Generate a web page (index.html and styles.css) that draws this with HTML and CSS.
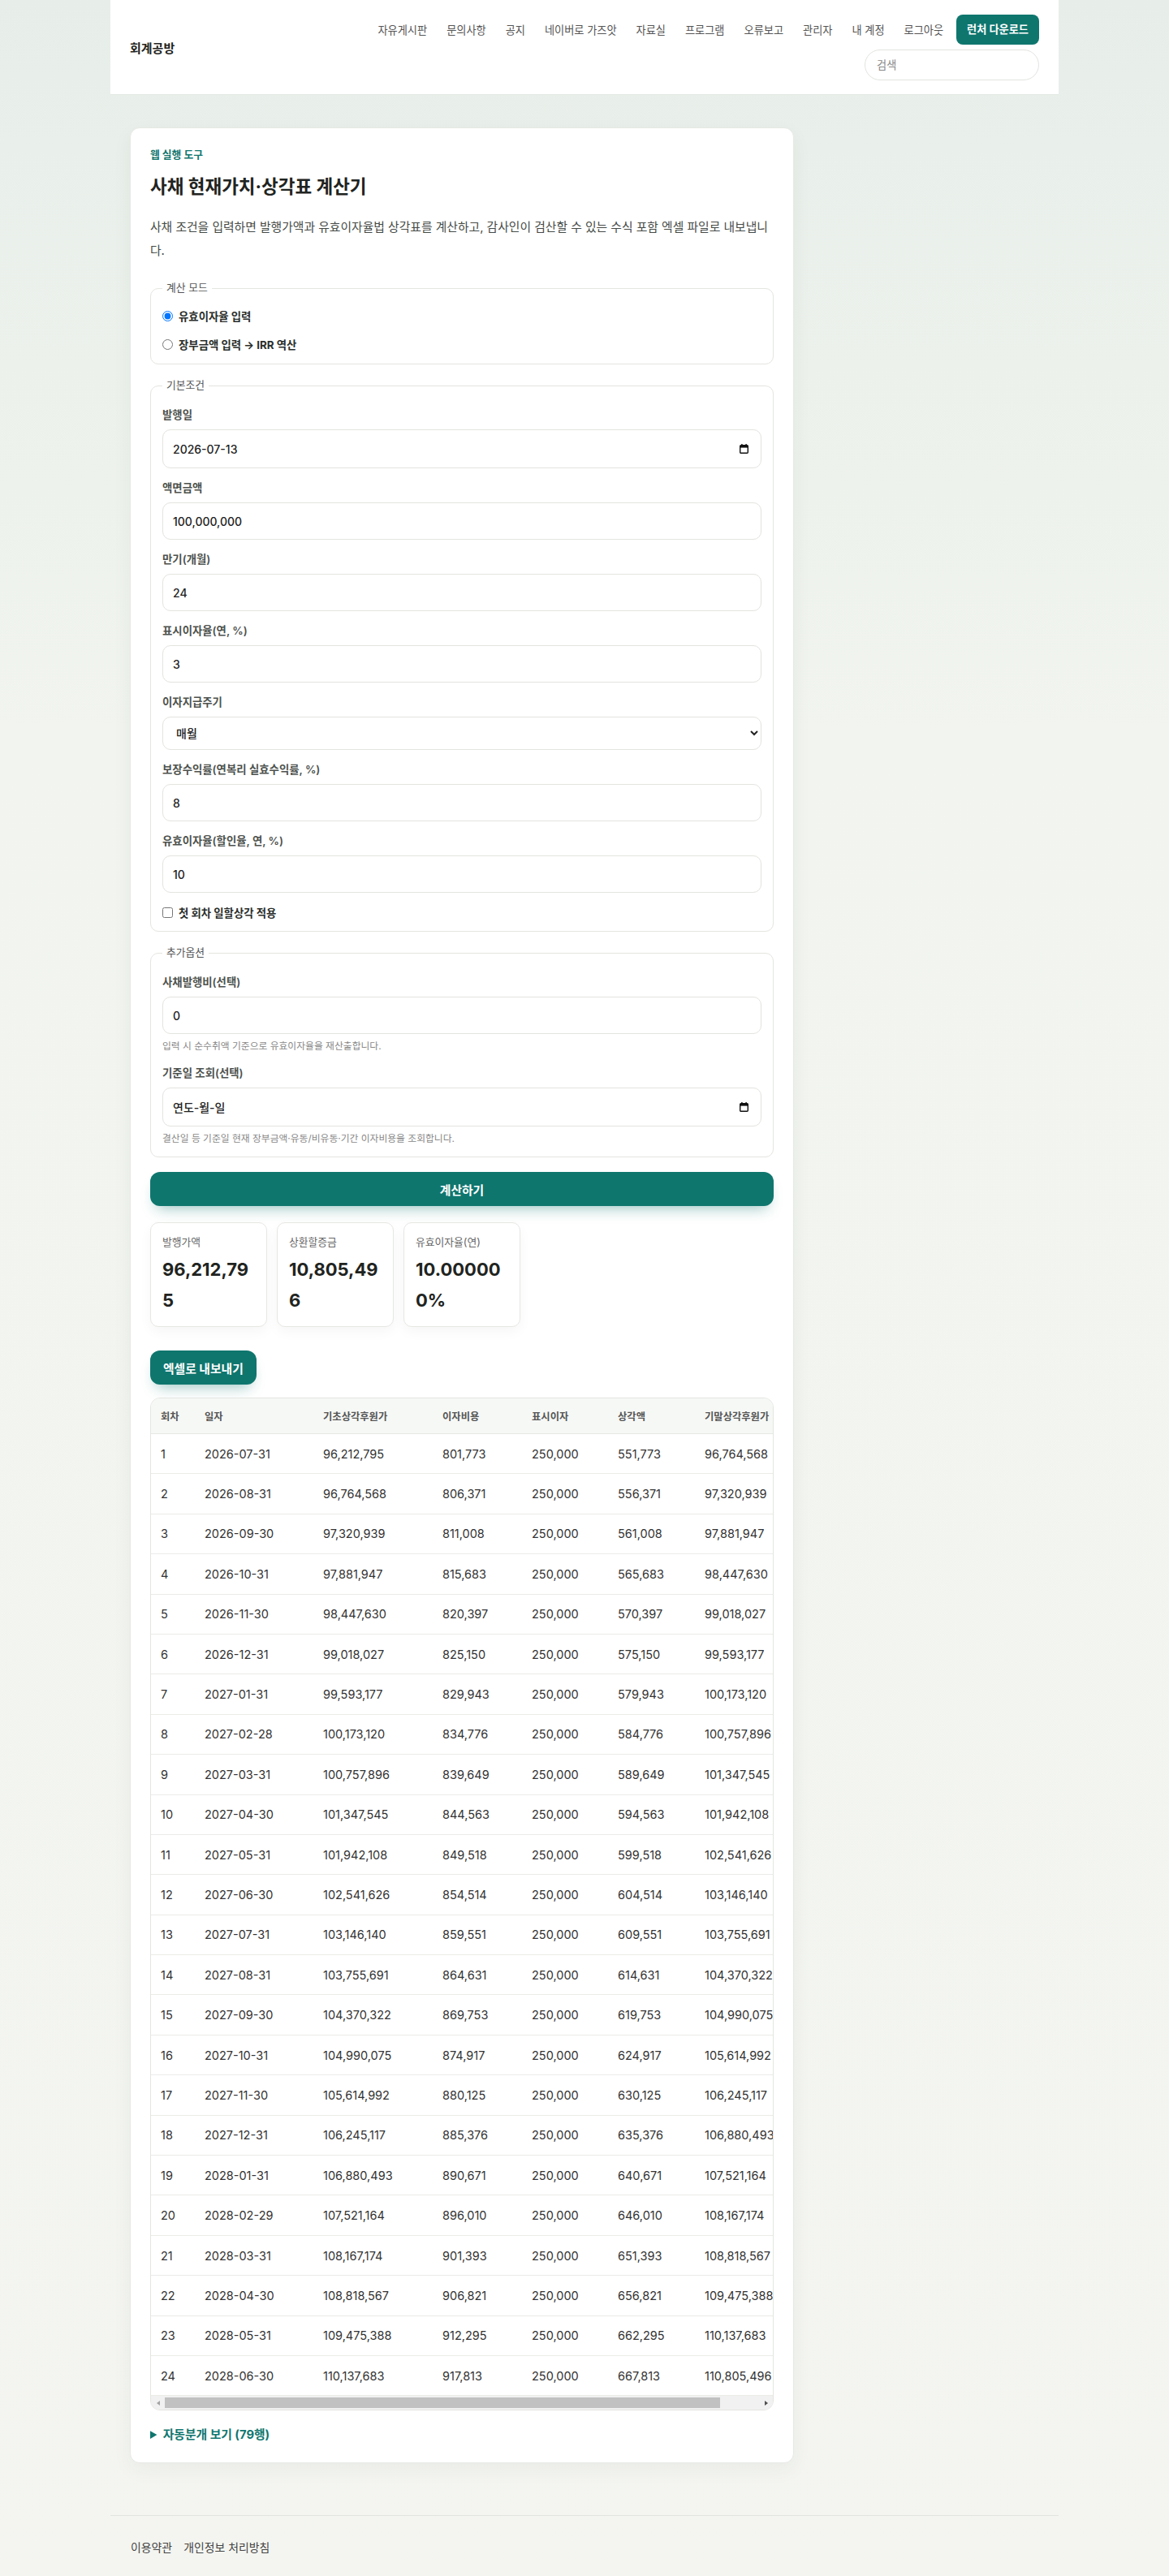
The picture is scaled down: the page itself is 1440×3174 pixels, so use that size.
FILE: index.html
```html
<!DOCTYPE html>
<html lang="ko">
<head>
  <meta charset="UTF-8" />
  <meta name="viewport" content="width=device-width, initial-scale=1.0"/>
  <title>사채 현재가치·상각표 계산기 - 회계공방</title>
  <link rel="stylesheet" href="styles.css">
</head>
<body>
  <div class="wrap">
    <header class="site-header">
      <div class="brand">회계공방</div>
      <div class="header-right">
        <nav class="nav">
          <a href="#">자유게시판</a>
          <a href="#">문의사항</a>
          <a href="#">공지</a>
          <a href="#">네이버로 가즈앗</a>
          <a href="#">자료실</a>
          <a href="#">프로그램</a>
          <a href="#">오류보고</a>
          <a href="#">관리자</a>
          <a href="#">내 계정</a>
          <a href="#">로그아웃</a>
          <a href="#" class="launcher-btn">런처 다운로드</a>
        </nav>
        <input class="search" type="text" placeholder="검색">
      </div>
    </header>
  </div>

  <main class="wrap page">
    <section class="card">
      <div class="eyebrow">웹 실행 도구</div>
      <h1 class="title">사채 현재가치·상각표 계산기</h1>
      <p class="desc">사채 조건을 입력하면 발행가액과 유효이자율법 상각표를 계산하고, 감사인이 검산할 수 있는 수식 포함 엑셀 파일로 내보냅니다.</p>

      <!-- 계산 모드 -->
      <fieldset class="group">
        <legend>계산 모드</legend>
        <label class="choice"><input type="radio" name="mode" checked> 유효이자율 입력</label>
        <label class="choice"><input type="radio" name="mode"> 장부금액 입력 → IRR 역산</label>
      </fieldset>

      <!-- 기본조건 -->
      <fieldset class="group">
        <legend>기본조건</legend>
        <div class="field">
          <label>발행일</label>
          <div class="date-field">
            <input type="text" value="2026-07-13">
            <svg class="cal-icon" width="11" height="12" viewBox="0 0 11 12"><path d="M2.2 0h1.4v2H2.2zM7.4 0h1.4v2H7.4z" fill="#111"/><rect x="0.7" y="1.7" width="9.6" height="9.6" rx="1" fill="none" stroke="#111" stroke-width="1.4"/><rect x="1" y="2" width="9" height="2.6" fill="#111"/></svg>
          </div>
        </div>
        <div class="field">
          <label>액면금액</label>
          <input class="field-input" type="text" value="100,000,000">
        </div>
        <div class="field">
          <label>만기(개월)</label>
          <input class="field-input" type="text" value="24">
        </div>
        <div class="field">
          <label>표시이자율(연, %)</label>
          <input class="field-input" type="text" value="3">
        </div>
        <div class="field">
          <label>이자지급주기</label>
          <select class="field-select">
            <option>매월</option>
            <option>분기</option>
            <option>반기</option>
            <option>매년</option>
          </select>
        </div>
        <div class="field">
          <label>보장수익률(연복리 실효수익률, %)</label>
          <input class="field-input" type="text" value="8">
        </div>
        <div class="field">
          <label>유효이자율(할인율, 연, %)</label>
          <input class="field-input" type="text" value="10">
        </div>
        <label class="choice check"><input type="checkbox"> 첫 회차 일할상각 적용</label>
      </fieldset>

      <!-- 추가옵션 -->
      <fieldset class="group">
        <legend>추가옵션</legend>
        <div class="field">
          <label>사채발행비(선택)</label>
          <input class="field-input" type="text" value="0">
          <div class="hint">입력 시 순수취액 기준으로 유효이자율을 재산출합니다.</div>
        </div>
        <div class="field last">
          <label>기준일 조회(선택)</label>
          <div class="date-field">
            <input type="text" value="연도-월-일">
            <svg class="cal-icon" width="11" height="12" viewBox="0 0 11 12"><path d="M2.2 0h1.4v2H2.2zM7.4 0h1.4v2H7.4z" fill="#111"/><rect x="0.7" y="1.7" width="9.6" height="9.6" rx="1" fill="none" stroke="#111" stroke-width="1.4"/><rect x="1" y="2" width="9" height="2.6" fill="#111"/></svg>
          </div>
          <div class="hint">결산일 등 기준일 현재 장부금액·유동/비유동·기간 이자비용을 조회합니다.</div>
        </div>
      </fieldset>

      <button class="calc-btn">계산하기</button>

      <div class="stats">
        <div class="stat">
          <div class="stat-label">발행가액</div>
          <div class="stat-value">96,212,795</div>
        </div>
        <div class="stat">
          <div class="stat-label">상환할증금</div>
          <div class="stat-value">10,805,496</div>
        </div>
        <div class="stat">
          <div class="stat-label">유효이자율(연)</div>
          <div class="stat-value">10.000000%</div>
        </div>
      </div>

      <button class="export-btn">엑셀로 내보내기</button>

      <div class="table-wrap">
        <div class="table-scroll">
          <table class="schedule">
            <colgroup>
              <col style="width:54px"><col style="width:146px"><col style="width:147px"><col style="width:110px"><col style="width:106px"><col style="width:107px"><col style="width:152px">
            </colgroup>
            <thead>
              <tr><th>회차</th><th>일자</th><th>기초상각후원가</th><th>이자비용</th><th>표시이자</th><th>상각액</th><th>기말상각후원가</th></tr>
            </thead>
            <tbody>
              <tr><td>1</td><td>2026-07-31</td><td>96,212,795</td><td>801,773</td><td>250,000</td><td>551,773</td><td>96,764,568</td></tr>
              <tr><td>2</td><td>2026-08-31</td><td>96,764,568</td><td>806,371</td><td>250,000</td><td>556,371</td><td>97,320,939</td></tr>
              <tr><td>3</td><td>2026-09-30</td><td>97,320,939</td><td>811,008</td><td>250,000</td><td>561,008</td><td>97,881,947</td></tr>
              <tr><td>4</td><td>2026-10-31</td><td>97,881,947</td><td>815,683</td><td>250,000</td><td>565,683</td><td>98,447,630</td></tr>
              <tr><td>5</td><td>2026-11-30</td><td>98,447,630</td><td>820,397</td><td>250,000</td><td>570,397</td><td>99,018,027</td></tr>
              <tr><td>6</td><td>2026-12-31</td><td>99,018,027</td><td>825,150</td><td>250,000</td><td>575,150</td><td>99,593,177</td></tr>
              <tr><td>7</td><td>2027-01-31</td><td>99,593,177</td><td>829,943</td><td>250,000</td><td>579,943</td><td>100,173,120</td></tr>
              <tr><td>8</td><td>2027-02-28</td><td>100,173,120</td><td>834,776</td><td>250,000</td><td>584,776</td><td>100,757,896</td></tr>
              <tr><td>9</td><td>2027-03-31</td><td>100,757,896</td><td>839,649</td><td>250,000</td><td>589,649</td><td>101,347,545</td></tr>
              <tr><td>10</td><td>2027-04-30</td><td>101,347,545</td><td>844,563</td><td>250,000</td><td>594,563</td><td>101,942,108</td></tr>
              <tr><td>11</td><td>2027-05-31</td><td>101,942,108</td><td>849,518</td><td>250,000</td><td>599,518</td><td>102,541,626</td></tr>
              <tr><td>12</td><td>2027-06-30</td><td>102,541,626</td><td>854,514</td><td>250,000</td><td>604,514</td><td>103,146,140</td></tr>
              <tr><td>13</td><td>2027-07-31</td><td>103,146,140</td><td>859,551</td><td>250,000</td><td>609,551</td><td>103,755,691</td></tr>
              <tr><td>14</td><td>2027-08-31</td><td>103,755,691</td><td>864,631</td><td>250,000</td><td>614,631</td><td>104,370,322</td></tr>
              <tr><td>15</td><td>2027-09-30</td><td>104,370,322</td><td>869,753</td><td>250,000</td><td>619,753</td><td>104,990,075</td></tr>
              <tr><td>16</td><td>2027-10-31</td><td>104,990,075</td><td>874,917</td><td>250,000</td><td>624,917</td><td>105,614,992</td></tr>
              <tr><td>17</td><td>2027-11-30</td><td>105,614,992</td><td>880,125</td><td>250,000</td><td>630,125</td><td>106,245,117</td></tr>
              <tr><td>18</td><td>2027-12-31</td><td>106,245,117</td><td>885,376</td><td>250,000</td><td>635,376</td><td>106,880,493</td></tr>
              <tr><td>19</td><td>2028-01-31</td><td>106,880,493</td><td>890,671</td><td>250,000</td><td>640,671</td><td>107,521,164</td></tr>
              <tr><td>20</td><td>2028-02-29</td><td>107,521,164</td><td>896,010</td><td>250,000</td><td>646,010</td><td>108,167,174</td></tr>
              <tr><td>21</td><td>2028-03-31</td><td>108,167,174</td><td>901,393</td><td>250,000</td><td>651,393</td><td>108,818,567</td></tr>
              <tr><td>22</td><td>2028-04-30</td><td>108,818,567</td><td>906,821</td><td>250,000</td><td>656,821</td><td>109,475,388</td></tr>
              <tr><td>23</td><td>2028-05-31</td><td>109,475,388</td><td>912,295</td><td>250,000</td><td>662,295</td><td>110,137,683</td></tr>
              <tr><td>24</td><td>2028-06-30</td><td>110,137,683</td><td>917,813</td><td>250,000</td><td>667,813</td><td>110,805,496</td></tr>
            </tbody>
          </table>
        </div>
        <!-- 가로 스크롤 표시줄 -->
        <div class="scrollbar">
          <span class="sb-arrow sb-left"></span>
          <div class="sb-track"><div class="sb-thumb"></div></div>
          <span class="sb-arrow sb-right"></span>
        </div>
      </div>

      <details class="journal">
        <summary>자동분개 보기 (79행)</summary>
        <p>분개 내역은 엑셀 파일의 "분개" 시트에서 확인할 수 있습니다.</p>
      </details>
    </section>
  </main>

  <footer class="wrap site-footer">
    <a href="#">이용약관</a>
    <a href="#">개인정보 처리방침</a>
  </footer>
</body>
</html>
```

FILE: styles.css
```css
body {
  margin: 0;
  font-family: Inter, "Noto Sans CJK KR", sans-serif;
  color: #2b2f2c;
  background: linear-gradient(180deg, #e7eee9 0, #f1f4ef 900px, #f4f5f1 100%);
  min-height: 100vh;
}
a {
  color: inherit;
  text-decoration: none;
}
.wrap {
  max-width: 1168px;
  margin: 0 auto;
  box-sizing: border-box;
}

/* header */
.site-header {
  background: #fff;
  display: flex;
  justify-content: space-between;
  align-items: center;
  padding: 18px 24px;
  border-bottom: 1px solid #e3e9e4;
  box-sizing: border-box;
  height: 117px;
}
.brand {
  font-size: 15px;
  font-weight: 700;
  color: #1f2421;
}
.header-right {
  display: flex;
  flex-direction: column;
  align-items: flex-end;
  gap: 6px;
}
.nav {
  display: flex;
  align-items: center;
  gap: 8px;
}
.nav a {
  font-size: 13.2px;
  color: #555;
  padding: 0 8px;
}
.nav a.launcher-btn {
  background: #0f766e;
  color: #fff;
  font-weight: 700;
  height: 37px;
  line-height: 37px;
  padding: 0 13px;
  border-radius: 8px;
}
.search {
  width: 215px;
  height: 38px;
  box-sizing: border-box;
  border: 1px solid #e2e5e0;
  border-radius: 999px;
  padding: 0 14px;
  font-family: inherit;
  font-size: 13.2px;
  outline: none;
}
.search::placeholder {
  color: #888;
}

/* main card */
.page {
  padding: 40px 24px 64px;
}
.card {
  max-width: 818px;
  background: #fff;
  border: 1px solid #e6e9e4;
  border-radius: 12px;
  box-shadow: 0 8px 24px rgba(30, 50, 40, 0.05);
  padding: 24px 24px 24px;
  box-sizing: border-box;
}
.eyebrow {
  font-size: 12.8px;
  line-height: 18px;
  font-weight: 700;
  color: #0f766e;
  margin-bottom: 16px;
}
.title {
  font-size: 22.5px;
  line-height: 28px;
  font-weight: 700;
  color: #1f2421;
  margin: 0 0 22px;
}
.desc {
  font-size: 14.8px;
  line-height: 29px;
  color: #464b47;
  margin: 0 0 23px;
}

/* fieldsets */
.group {
  border: 1px solid #e4e6e0;
  border-radius: 10px;
  margin: 0 0 18px;
  padding: 15px 14px 13px;
  min-width: 0;
}
.group legend {
  font-size: 12.8px;
  line-height: 16px;
  color: #555;
  padding: 0 5px;
}
.choice {
  display: flex;
  align-items: center;
  height: 22px;
  font-size: 13.4px;
  font-weight: 700;
  color: #2b2f2c;
}
.choice + .choice {
  margin-top: 13px;
}
.choice input {
  margin: 0 7px 0 0;
}
.choice.check {
  height: 20px;
}
.field {
  margin-bottom: 14px;
}
.field:first-of-type {
  padding-top: 3px;
}
.field.last {
  margin-bottom: 0;
}
.field label {
  display: block;
  font-size: 13.4px;
  line-height: 20px;
  font-weight: 600;
  color: #4d524e;
  margin-bottom: 8px;
}
.field-input,
.field-select {
  display: block;
  width: 100%;
  height: 46px;
  box-sizing: border-box;
  border: 1px solid #e3e5df;
  border-radius: 10px;
  background: #fff;
  padding: 0 12px;
  font-family: inherit;
  font-size: 14px;
  font-weight: 500;
  color: #222;
  outline: none;
}
.field-select {
  height: 41px;
  padding: 0 12px;
}
.date-field {
  display: flex;
  align-items: center;
  height: 48px;
  box-sizing: border-box;
  border: 1px solid #e3e5df;
  border-radius: 10px;
  padding: 0 15px 0 12px;
}
.date-field input {
  flex: 1;
  border: 0;
  padding: 0;
  font-family: inherit;
  font-size: 14px;
  font-weight: 500;
  color: #222;
  outline: none;
}
.hint {
  font-size: 11.8px;
  line-height: 18px;
  color: #888;
  margin-top: 6px;
}

/* buttons */
.calc-btn,
.export-btn {
  display: block;
  border: none;
  background: #0f766e;
  color: #fff;
  font-family: inherit;
  font-weight: 700;
  height: 42px;
  border-radius: 12px;
  cursor: pointer;
  box-shadow: 0 10px 18px -8px rgba(15, 118, 110, 0.45);
}
.calc-btn {
  width: 100%;
  font-size: 14.8px;
  margin-top: 16px;
}
.export-btn {
  font-size: 14.8px;
  padding: 0 16px;
  margin-top: 29px;
}

/* result cards */
.stats {
  display: grid;
  grid-template-columns: repeat(auto-fill, minmax(140px, 1fr));
  gap: 12px;
  margin-top: 20px;
}
.stat {
  border: 1px solid #e6e8e3;
  border-radius: 10px;
  padding: 16px 14px 13px;
  box-shadow: 0 6px 16px rgba(0, 0, 0, 0.04);
}
.stat-label {
  font-size: 12.8px;
  line-height: 16px;
  color: #666;
  margin-bottom: 6px;
}
.stat-value {
  font-size: 22px;
  line-height: 38px;
  font-weight: 700;
  color: #1f2421;
  word-break: break-all;
}

/* schedule table */
.table-wrap {
  margin-top: 16px;
  border: 1px solid #e4e6e1;
  border-radius: 12px;
  overflow: hidden;
}
.table-scroll {
  overflow: hidden;
}
.schedule {
  border-collapse: collapse;
  table-layout: fixed;
  width: 822px;
}
.schedule th {
  height: 43px;
  background: #f6f8f6;
  text-align: left;
  padding: 0 12px;
  font-size: 12.3px;
  font-weight: 600;
  color: #555;
  border-bottom: 1px solid #e6e8e3;
  white-space: nowrap;
}
.schedule td {
  height: 48.4px;
  padding: 0 12px;
  font-size: 14.5px;
  color: #333;
  border-bottom: 1px solid #ebece8;
  white-space: nowrap;
}
.scrollbar {
  display: flex;
  align-items: stretch;
  height: 17px;
  background: #f1f1f1;
}
.sb-arrow {
  width: 17px;
  display: flex;
  align-items: center;
  justify-content: center;
}
.sb-arrow::before {
  content: "";
  border-top: 3.5px solid transparent;
  border-bottom: 3.5px solid transparent;
}
.sb-left::before {
  border-right: 4px solid #a3a3a3;
}
.sb-right::before {
  border-left: 4px solid #505050;
}
.sb-track {
  flex: 1;
  padding: 2px 0;
}
.sb-thumb {
  width: 93.5%;
  height: 100%;
  background: #c1c1c1;
}

.journal {
  margin-top: 20px;
}
.journal summary {
  font-size: 14.8px;
  line-height: 20px;
  font-weight: 700;
  color: #0f766e;
  cursor: pointer;
}

/* footer */
.site-footer {
  border-top: 1px solid #e2e4df;
  padding: 28px 25px 40px;
  display: flex;
  gap: 14px;
  font-size: 13.9px;
  color: #444;
}
```
